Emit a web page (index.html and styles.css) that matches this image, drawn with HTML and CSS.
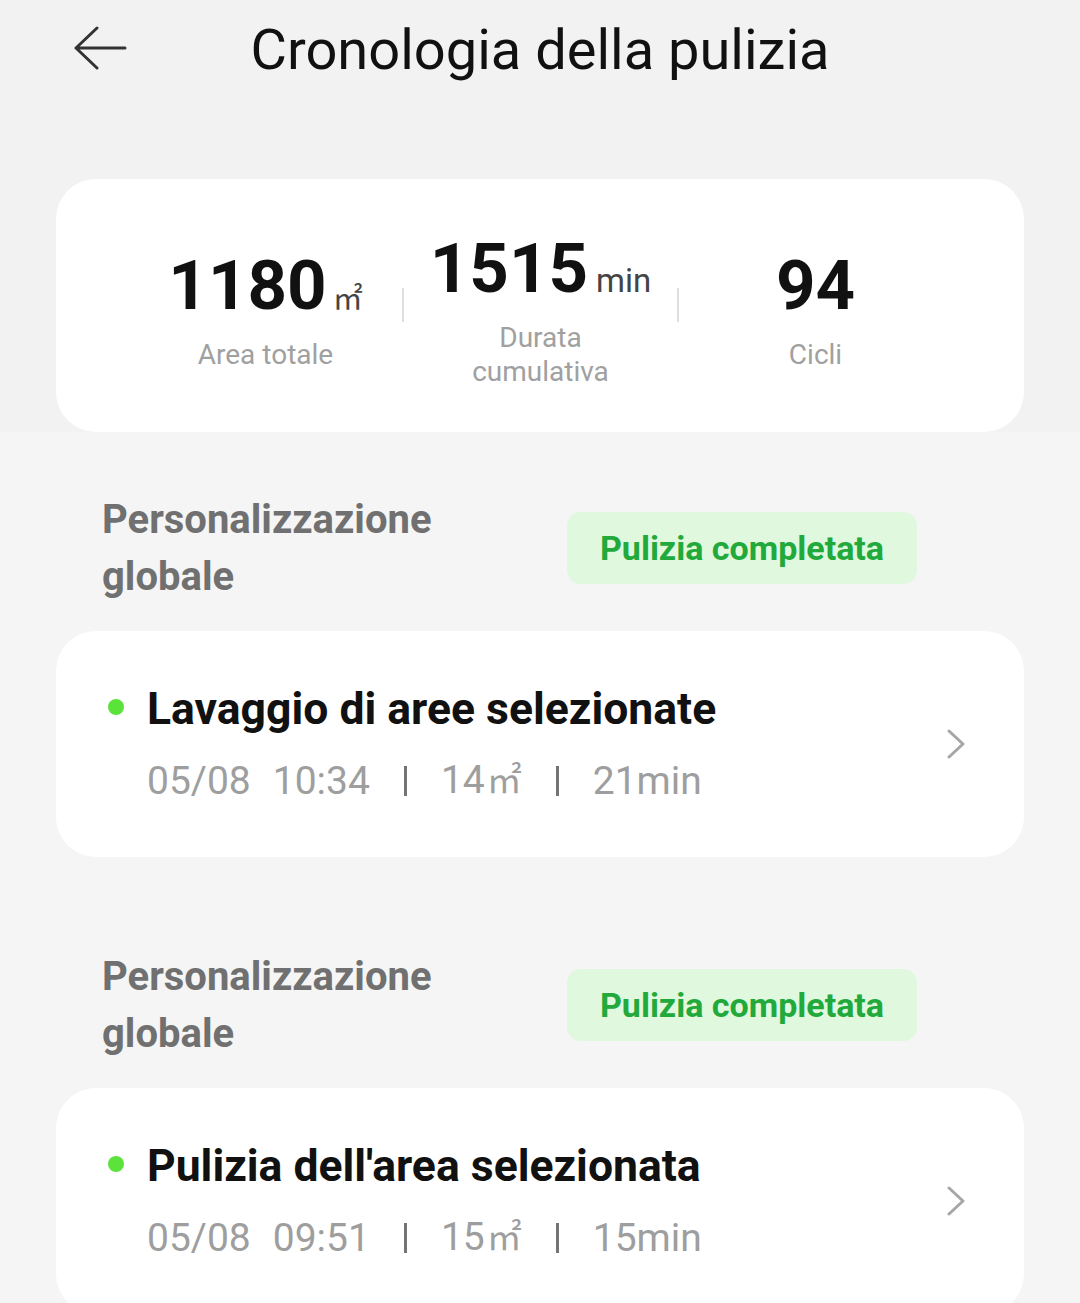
FILE: index.html
```html
<!DOCTYPE html>
<html lang="it">
<head>
    <meta charset="UTF-8">
    <meta name="viewport" content="width=device-width, initial-scale=1.0">
    <title>Cronologia della pulizia</title>
    <link rel="stylesheet" href="styles.css">
</head>
<body>

    <div class="top">
        <div class="header">
            <button class="back" aria-label="Indietro">
                <svg width="54" height="44" viewBox="0 0 54 44">
                    <path d="M24 2 L3 22 L24 42 M3 22 H52" fill="none" stroke="#333" stroke-width="3" stroke-linecap="round" stroke-linejoin="round"/>
                </svg>
            </button>
            <h1>Cronologia della pulizia</h1>
            <div></div>
        </div>

        <div class="stats">
            <div class="stat">
                <div class="num">1180<span class="unit sq">㎡</span></div>
                <div class="label">Area totale</div>
            </div>
            <div class="divider"></div>
            <div class="stat">
                <div class="num">1515<span class="unit">min</span></div>
                <div class="label">Durata<br>cumulativa</div>
            </div>
            <div class="divider"></div>
            <div class="stat">
                <div class="num">94</div>
                <div class="label">Cicli</div>
            </div>
        </div>
    </div>

    <div class="history">

        <div class="item">
            <div class="item-head">
                <div class="mode">Personalizzazione<br>globale</div>
                <div class="badge">Pulizia completata</div>
            </div>
            <div class="card">
                <div class="card-body">
                    <div class="title"><span class="dot"></span>Lavaggio di aree selezionate</div>
                    <div class="meta">
                        <span>05/08</span>
                        <span class="time">10:34</span>
                        <i class="bar"></i>
                        <span>14<span class="sq">㎡</span></span>
                        <i class="bar"></i>
                        <span>21min</span>
                    </div>
                </div>
                <svg class="chevron" width="20" height="30" viewBox="0 0 20 30">
                    <path d="M3 2 L17 15 L3 28" fill="none" stroke="#a6a6a6" stroke-width="3" stroke-linecap="round" stroke-linejoin="round"/>
                </svg>
            </div>
        </div>

        <div class="item">
            <div class="item-head">
                <div class="mode">Personalizzazione<br>globale</div>
                <div class="badge">Pulizia completata</div>
            </div>
            <div class="card">
                <div class="card-body">
                    <div class="title"><span class="dot"></span>Pulizia dell'area selezionata</div>
                    <div class="meta">
                        <span>05/08</span>
                        <span class="time">09:51</span>
                        <i class="bar"></i>
                        <span>15<span class="sq">㎡</span></span>
                        <i class="bar"></i>
                        <span>15min</span>
                    </div>
                </div>
                <svg class="chevron" width="20" height="30" viewBox="0 0 20 30">
                    <path d="M3 2 L17 15 L3 28" fill="none" stroke="#a6a6a6" stroke-width="3" stroke-linecap="round" stroke-linejoin="round"/>
                </svg>
            </div>
        </div>

    </div>

</body>
</html>
```

FILE: styles.css
```css
body {
    margin: 0;
    padding: 0;
    background: #f5f5f5;
    font-family: Roboto, "Noto Sans CJK SC", sans-serif;
    color: #111;
}

.top {
    background: #f2f2f2;
}

/* header */
.header {
    height: 100px;
    display: grid;
    grid-template-columns: 1fr auto 1fr;
    align-items: center;
}

.back {
    justify-self: start;
    margin-left: 73px;
    margin-bottom: 4px;
    padding: 0;
    border: none;
    background: none;
    display: flex;
    cursor: pointer;
}

h1 {
    margin: 0;
    font-size: 56px;
    font-weight: 400;
    line-height: 66px;
    color: #111;
}

/* stats card */
.stats {
    margin: 79px 56px 0 56px;
    padding: 55px 72px 43px 73px;
    background: #fff;
    border-radius: 40px;
    display: flex;
    align-items: center;
}

.stat {
    flex: 1;
    display: flex;
    flex-direction: column;
    align-items: center;
    text-align: center;
}

.num {
    font-size: 69px;
    font-weight: 700;
    line-height: 70px;
    color: #111;
}

.unit {
    font-size: 33px;
    font-weight: 400;
    line-height: 1;
    color: #444;
    margin-left: 8px;
}

.unit.sq {
    font-size: 30px;
    margin-left: 6px;
}

.label {
    margin-top: 17px;
    font-size: 28px;
    line-height: 34px;
    color: #a0a0a0;
}

.divider {
    width: 2px;
    height: 34px;
    background: #dedede;
    margin-bottom: 13px;
}

/* history list */
.history {
    padding-top: 59px;
    display: flex;
    flex-direction: column;
    gap: 91px;
}

.item-head {
    display: grid;
    grid-template-columns: 465px auto;
    align-items: center;
    padding-left: 102px;
}

.mode {
    font-size: 40px;
    font-weight: 700;
    line-height: 57px;
    color: #707070;
}

.badge {
    justify-self: start;
    width: 350px;
    height: 72px;
    box-sizing: border-box;
    display: flex;
    align-items: center;
    justify-content: center;
    background: #e0f8de;
    border-radius: 14px;
    color: #21a93b;
    font-size: 34px;
    font-weight: 700;
}

.card {
    margin: 26px 56px 0 56px;
    padding: 50px 58px 51px 52px;
    background: #fff;
    border-radius: 40px;
    display: flex;
    align-items: center;
}

.card-body {
    flex: 1;
}

.title {
    display: flex;
    align-items: center;
    font-size: 44.5px;
    font-weight: 700;
    line-height: 56px;
    color: #111;
}

.dot {
    width: 16px;
    height: 16px;
    border-radius: 50%;
    background: #5ce33b;
    margin-right: 23px;
    margin-bottom: 4px;
}

.meta {
    margin-top: 19px;
    margin-left: 39px;
    display: flex;
    align-items: center;
    font-size: 39px;
    line-height: 48px;
    color: #9e9e9e;
}

.meta .time {
    margin-left: 22px;
}

.meta .sq {
    font-size: 35px;
    margin-left: 2px;
}

.bar {
    width: 3px;
    height: 30px;
    background: #747474;
    margin: 0 34px;
}

.chevron {
    flex-shrink: 0;
}
```
